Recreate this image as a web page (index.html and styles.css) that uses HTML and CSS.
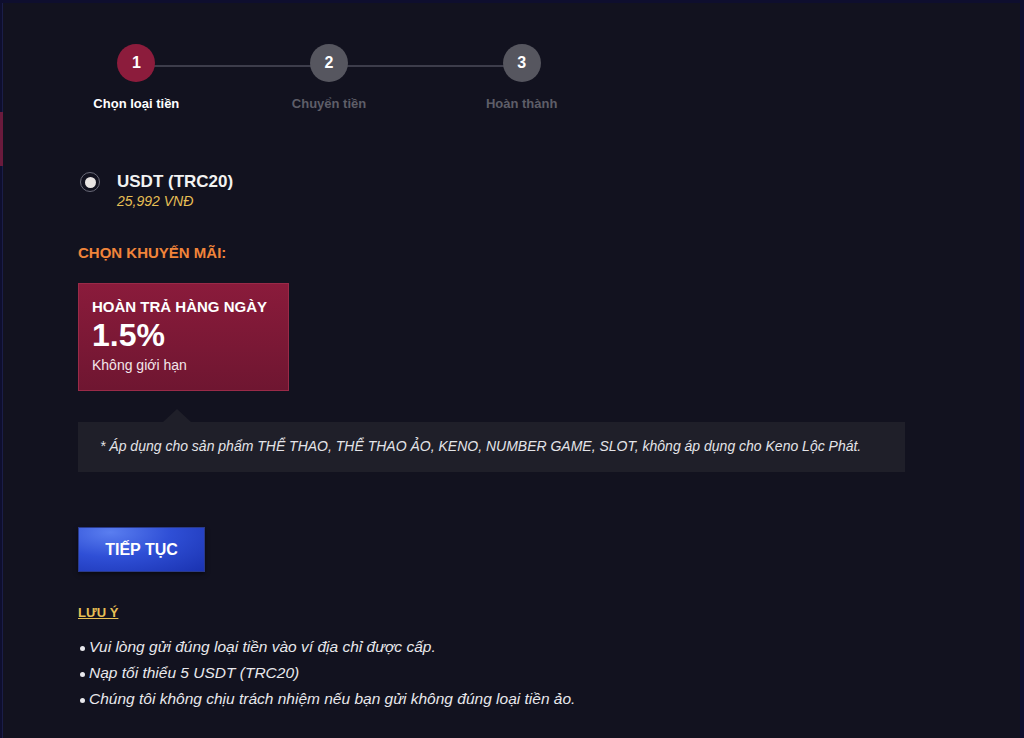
FILE: index.html
```html
<!DOCTYPE html>
<html lang="vi">
<head>
<meta charset="utf-8">
<link rel="stylesheet" href="styles.css">
</head>
<body>
<div class="frame">
  <div class="side-mark"></div>
  <main class="content">
    <ol class="steps">
      <li class="step active"><span class="dot">1</span><span class="step-label">Chọn loại tiền</span></li>
      <li class="step"><span class="dot">2</span><span class="step-label">Chuyển tiền</span></li>
      <li class="step"><span class="dot">3</span><span class="step-label">Hoàn thành</span></li>
    </ol>

    <label class="coin">
      <span class="radio"><span class="radio-inner"></span></span>
      <span class="coin-text">
        <span class="coin-name">USDT (TRC20)</span>
        <span class="coin-rate">25,992 VNĐ</span>
      </span>
    </label>

    <h3 class="promo-title">CHỌN KHUYẾN MÃI:</h3>

    <div class="promo-card">
      <div class="promo-name">HOÀN TRẢ HÀNG NGÀY</div>
      <div class="promo-value">1.5%</div>
      <div class="promo-limit">Không giới hạn</div>
    </div>

    <div class="note">* Áp dụng cho sản phẩm THỂ THAO, THỂ THAO ẢO, KENO, NUMBER GAME, SLOT, không áp dụng cho Keno Lộc Phát.</div>

    <button class="btn">TIẾP TỤC</button>

    <div class="notice-title">LƯU Ý</div>
    <ul class="notice">
      <li>Vui lòng gửi đúng loại tiền vào ví địa chỉ được cấp.</li>
      <li>Nạp tối thiểu 5 USDT (TRC20)</li>
      <li>Chúng tôi không chịu trách nhiệm nếu bạn gửi không đúng loại tiền ảo.</li>
    </ul>
  </main>
</div>
</body>
</html>
```

FILE: styles.css
```css
* { box-sizing: border-box; }
html, body { margin: 0; padding: 0; }
body {
  width: 1024px;
  height: 738px;
  overflow: hidden;
  background: #0e0e2e;
  font-family: "Liberation Sans", Arial, sans-serif;
  color: #fff;
}
.frame {
  position: relative;
  height: 738px;
  margin: 3px 4px 0 2px;
  background: #12121f;
  border-left: 1px solid #1a1d48;
}
.side-mark {
  position: absolute;
  left: -3px;
  top: 109px;
  width: 3px;
  height: 54px;
  background: #6a1a3c;
}
.content {
  padding: 0 0 0 75px;
}
.steps {
  list-style: none;
  margin: 0;
  padding: 41px 0 0 0;
  display: flex;
  width: 540px;
  position: relative;
}
.step {
  position: relative;
  width: 193px;
  display: flex;
  flex-direction: column;
  align-items: center;
}
.step:first-child { margin-left: -38px; }
.step + .step::before {
  content: "";
  position: absolute;
  top: 21px;
  right: 50%;
  width: 193px;
  height: 2px;
  background: #3d3d4b;
}
.dot {
  position: relative;
  z-index: 1;
  width: 38px;
  height: 38px;
  border-radius: 50%;
  background: #56565f;
  display: flex;
  align-items: center;
  justify-content: center;
  font-weight: bold;
  font-size: 16px;
  color: #fff;
}
.active .dot { background: #8c1c3c; }
.step-label {
  margin-top: 14px;
  font-size: 13px;
  font-weight: bold;
  color: #5e5e68;
}
.active .step-label { color: #fff; }

.coin {
  display: flex;
  align-items: flex-start;
  margin-top: 61px;
  gap: 17px;
}
.radio {
  margin-top: 0;
  margin-left: 2px;
  width: 20px;
  height: 20px;
  border-radius: 50%;
  border: 1.5px solid #6a6a78;
  display: flex;
  align-items: center;
  justify-content: center;
}
.radio-inner {
  width: 11px;
  height: 11px;
  border-radius: 50%;
  background: #e8e4e2;
}
.coin-text { display: flex; flex-direction: column; }
.coin-name { font-size: 17px; font-weight: bold; color: #f2f2f2; line-height: 20px; }
.coin-rate { font-size: 14px; font-style: italic; color: #e6bf55; line-height: 18px; }

.promo-title {
  margin: 33px 0 0 0;
  font-size: 15px;
  font-weight: bold;
  color: #f0843a;
  line-height: 20px;
}
.promo-card {
  margin-top: 20px;
  width: 211px;
  height: 108px;
  padding: 14px 13px 0 13px;
  background: linear-gradient(180deg, #8a1b3b 0%, #6f1631 100%);
  border: 1px solid #9a2a48;
}
.promo-name { font-size: 15px; font-weight: bold; line-height: 18px; }
.promo-value { font-size: 32px; font-weight: bold; line-height: 38px; }
.promo-limit { font-size: 14px; line-height: 18px; margin-top: 2px; color: #f2e6ea; }

.note {
  position: relative;
  margin-top: 31px;
  width: 827px;
  height: 50px;
  padding: 16px 22px 0 22px;
  background: #1f1f29;
  font-size: 14px;
  font-style: italic;
  color: #e4e4e8;
}
.note::before {
  content: "";
  position: absolute;
  top: -13px;
  left: 85px;
  border-left: 14px solid transparent;
  border-right: 14px solid transparent;
  border-bottom: 13px solid #1f1f29;
}

.btn {
  display: block;
  margin-top: 55px;
  width: 127px;
  height: 45px;
  border: 1px solid #2a3a8a;
  background: radial-gradient(ellipse at 25% 10%, #5a7ef0 0%, #2f4fd6 45%, #1a32b0 100%);
  color: #fff;
  font-family: "Liberation Sans", Arial, sans-serif;
  font-weight: bold;
  font-size: 16px;
  padding: 0;
  box-shadow: 0 2px 4px rgba(0,0,0,0.5);
}

.notice-title {
  margin-top: 33px;
  display: inline-block;
  font-size: 13px;
  font-weight: bold;
  color: #e6bf55;
  text-decoration: underline;
}
.notice {
  margin: 13px 0 0 0;
  padding: 0 0 0 11px;
  font-size: 15.5px;
  font-style: italic;
  color: #e8e8ec;
  line-height: 26px;
}
.notice li { padding-left: 0; list-style: none; position: relative; }
.notice li::before {
  content: "";
  position: absolute;
  left: -9px;
  top: 12px;
  width: 5px;
  height: 5px;
  border-radius: 50%;
  background: #e8e8ec;
}
```
